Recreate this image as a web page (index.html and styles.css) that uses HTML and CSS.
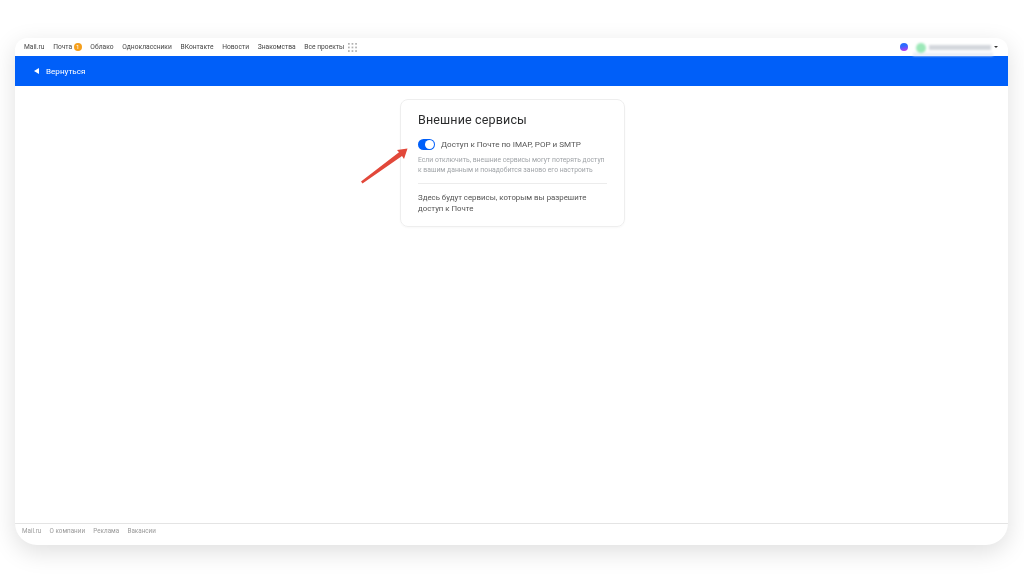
FILE: index.html
```html
<!DOCTYPE html>
<html lang="ru">
<head>
<meta charset="utf-8">
<title>Внешние сервисы</title>
<link rel="stylesheet" href="styles.css">
</head>
<body>
<div class="stage">
  <div class="window">
    <header class="topbar">
      <nav class="nav">
        <a>Mail.ru</a>
        <a class="mail">Почта<span class="badge">1</span></a>
        <a>Облако</a>
        <a>Одноклассники</a>
        <a>ВКонтакте</a>
        <a>Новости</a>
        <a>Знакомства</a>
        <a class="projects">Все проекты
          <svg class="grid-icon" width="9" height="9" viewBox="0 0 9 9"><g fill="#b0b0b0"><rect x="0" y="0" width="1.7" height="1.7"/><rect x="3.6" y="0" width="1.7" height="1.7"/><rect x="7.2" y="0" width="1.7" height="1.7"/><rect x="0" y="3.6" width="1.7" height="1.7"/><rect x="3.6" y="3.6" width="1.7" height="1.7"/><rect x="7.2" y="3.6" width="1.7" height="1.7"/><rect x="0" y="7.2" width="1.7" height="1.7"/><rect x="3.6" y="7.2" width="1.7" height="1.7"/><rect x="7.2" y="7.2" width="1.7" height="1.7"/></g></svg>
        </a>
      </nav>
      <div class="account">
        <span class="orb"></span>
        <span class="user"><span class="avatar"></span><span class="email"></span></span>
        <span class="caret"></span>
      </div>
    </header>
    <div class="backbar">
      <span class="back-arrow"></span>
      <span class="back-text">Вернуться</span>
    </div>
    <main class="content">
      <section class="card">
        <h1 class="title">Внешние сервисы</h1>
        <div class="toggle-row">
          <span class="toggle"><span class="knob"></span></span>
          <span class="toggle-label">Доступ к Почте по IMAP, POP и SMTP</span>
        </div>
        <p class="hint">Если отключить, внешние сервисы могут потерять доступ к вашим данным и понадобится заново его настроить</p>
        <hr class="divider">
        <p class="note">Здесь будут сервисы, которым вы разрешите доступ к Почте</p>
        <svg class="arrow" width="48" height="38" viewBox="0 0 48 38"><path d="M0 35.5 L38 6.3 L36 4 L46.5 2.5 L43 13 L41 10 L1.5 37.5 Z" fill="#e2483a"/></svg>
      </section>
    </main>
    <footer class="footer">
      <a>Mail.ru</a><a>О компании</a><a>Реклама</a><a>Вакансии</a>
    </footer>
  </div>
</div>
</body>
</html>
```
FILE: styles.css
```css
* { box-sizing: border-box; }
html, body { margin: 0; height: 100%; background: #fff; overflow: hidden; }
body { font-family: Roboto, "Liberation Sans", sans-serif; }
.stage { width: 1024px; height: 576px; padding: 38px 16px 31px 15px; }
.window {
  height: 507px; display: flex; flex-direction: column; background: #fff;
  border-radius: 12px 12px 22px 22px; overflow: hidden;
  box-shadow: 0 7px 24px rgba(0,0,0,.13);
}
.topbar, .content, .footer, .back-text { filter: blur(.3px); }
.topbar { height: 18px; flex: none; display: flex; align-items: center; justify-content: space-between; padding: 0 10px 0 9px; }
.nav { display: flex; align-items: center; gap: 8.7px; font-size: 6.7px; color: #444; white-space: nowrap; }
.mail, .projects { display: flex; align-items: center; }
.badge { width: 8px; height: 8px; margin-left: 1.5px; border-radius: 50%; background: #f59f1c; color: #fff; font-size: 6px; line-height: 8px; text-align: center; }
.grid-icon { margin-left: 4px; }
.account { display: flex; align-items: center; }
.orb { width: 8px; height: 8px; border-radius: 50%; background: linear-gradient(170deg, #2a6bff 35%, #b43cf0 90%); margin-right: 5px; }
.user { width: 80px; height: 16px; margin-top: 1px; display: flex; align-items: center; gap: 3px; padding-left: 3px; background: linear-gradient(#fff 0 70%, #dfe6f1); filter: blur(1px); }
.avatar { width: 10px; height: 10px; border-radius: 50%; background: #9ce8b8; }
.email { width: 62px; height: 5px; background: #d3d7dc; }
.caret { margin-left: 1px; border: 2px solid transparent; border-top: 2.5px solid #333; border-bottom: 0; }
.backbar { height: 30px; flex: none; background: #005ff9; color: #fff; display: flex; align-items: center; padding-left: 19px; }
.back-arrow { border: 3.5px solid transparent; border-right: 5px solid #fff; border-left: 0; margin-right: 7px; }
.back-text { font-size: 8.1px; }
.content { flex: 1; display: flex; justify-content: center; align-items: flex-start; padding: 13px 0 0 2px; min-height: 0; }
.card { position: relative; width: 225px; height: 128px; padding: 12px 17px 0; border: 1px solid #eee; border-radius: 8px; box-shadow: 0 1px 2px rgba(0,0,0,.03); color: #333; }
.title { margin: 0; font-size: 12.5px; line-height: 16px; font-weight: 400; letter-spacing: .15px; color: #2c2d2e; }
.toggle-row { display: flex; align-items: center; margin-top: 10px; height: 12px; }
.toggle { width: 17px; height: 11px; border-radius: 6px; background: #005ff9; position: relative; margin-right: 6px; flex: none; }
.knob { position: absolute; right: 1px; top: 1px; width: 9px; height: 9px; border-radius: 50%; background: #fff; }
.toggle-label { font-size: 8.1px; color: #555; white-space: nowrap; }
.hint { margin: 5px 0 0; font-size: 6.8px; line-height: 10px; color: #a0a4a8; }
.divider { border: 0; border-top: 1px solid #ececec; margin: 8px 0 0; }
.note { margin: 8px 0 0; font-size: 7.85px; line-height: 11px; color: #555; }
.arrow { position: absolute; left: -40px; top: 46px; }
.footer { height: 22px; flex: none; border-top: 1px solid #e4e4e4; display: flex; align-items: flex-start; gap: 8.3px; padding: 3px 0 0 7px; font-size: 6.3px; color: #999; }
```
